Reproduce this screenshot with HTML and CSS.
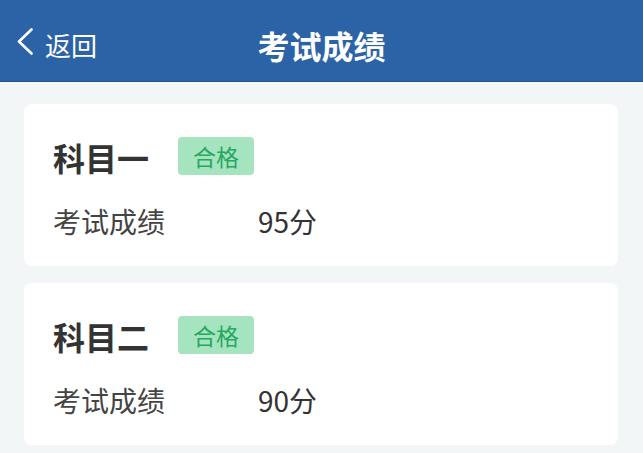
FILE: index.html
```html
<!DOCTYPE html>
<html lang="zh-CN">
<head>
<meta charset="utf-8">
<title>考试成绩</title>
<link rel="stylesheet" href="styles.css">
</head>
<body>
<header class="topbar">
  <div class="back">
    <svg class="chev" width="16" height="27" viewBox="0 0 16 27"><polyline points="14.5,1.5 2,13.5 14.5,25.5" fill="none" stroke="#fff" stroke-width="2.6" stroke-linecap="round" stroke-linejoin="round"/></svg>
    <span class="back-text">返回</span>
  </div>
  <h1 class="title">考试成绩</h1>
  <div></div>
</header>
<main class="list">
  <section class="card">
    <div class="card-head">
      <span class="subject">科目一</span>
      <span class="badge">合格</span>
    </div>
    <div class="row">
      <span class="label">考试成绩</span>
      <span class="value">95分</span>
    </div>
  </section>
  <section class="card">
    <div class="card-head">
      <span class="subject">科目二</span>
      <span class="badge">合格</span>
    </div>
    <div class="row">
      <span class="label">考试成绩</span>
      <span class="value">90分</span>
    </div>
  </section>
</main>
</body>
</html>
```
FILE: styles.css
```css
* { box-sizing: border-box; }
html, body {
  margin: 0;
  padding: 0;
}
body {
  background: #f3f6f7;
  font-family: "Noto Sans CJK SC", "Noto Sans", sans-serif;
  width: 643px;
  height: 453px;
  overflow: hidden;
}
.topbar {
  height: 82px;
  background: #2c63a6;
  border-bottom: 1px solid #245390;
  display: grid;
  grid-template-columns: 1fr auto 1fr;
  align-items: center;
  padding-top: 8px;
  color: #fff;
}
.back {
  display: flex;
  align-items: center;
  padding-left: 17px;
}
.chev {
  display: block;
  margin-bottom: 6px;
}
.back-text {
  font-size: 26px;
  line-height: 36px;
  margin-left: 12px;
}
.title {
  margin: 0;
  font-size: 32px;
  line-height: 40px;
  font-weight: 700;
}
.list {
  padding: 22px 25px 0 24px;
  display: flex;
  flex-direction: column;
  gap: 17px;
}
.card {
  background: #fff;
  border-radius: 8px;
  height: 162px;
  padding: 33px 0 0 29px;
}
.card-head {
  display: flex;
  align-items: center;
  height: 40px;
}
.subject {
  font-size: 32px;
  line-height: 40px;
  font-weight: 700;
  color: #333;
}
.badge {
  margin-left: 29px;
  height: 38px;
  line-height: 38px;
  padding: 0 15px;
  font-size: 23px;
  background: #a6e4bf;
  color: #27a862;
  border-radius: 4px;
  margin-top: -3px;
}
.row {
  margin-top: 26px;
  display: grid;
  grid-template-columns: 205px auto;
  font-size: 28px;
  line-height: 36px;
  color: #444;
}
.value {
  color: #333;
}
```
